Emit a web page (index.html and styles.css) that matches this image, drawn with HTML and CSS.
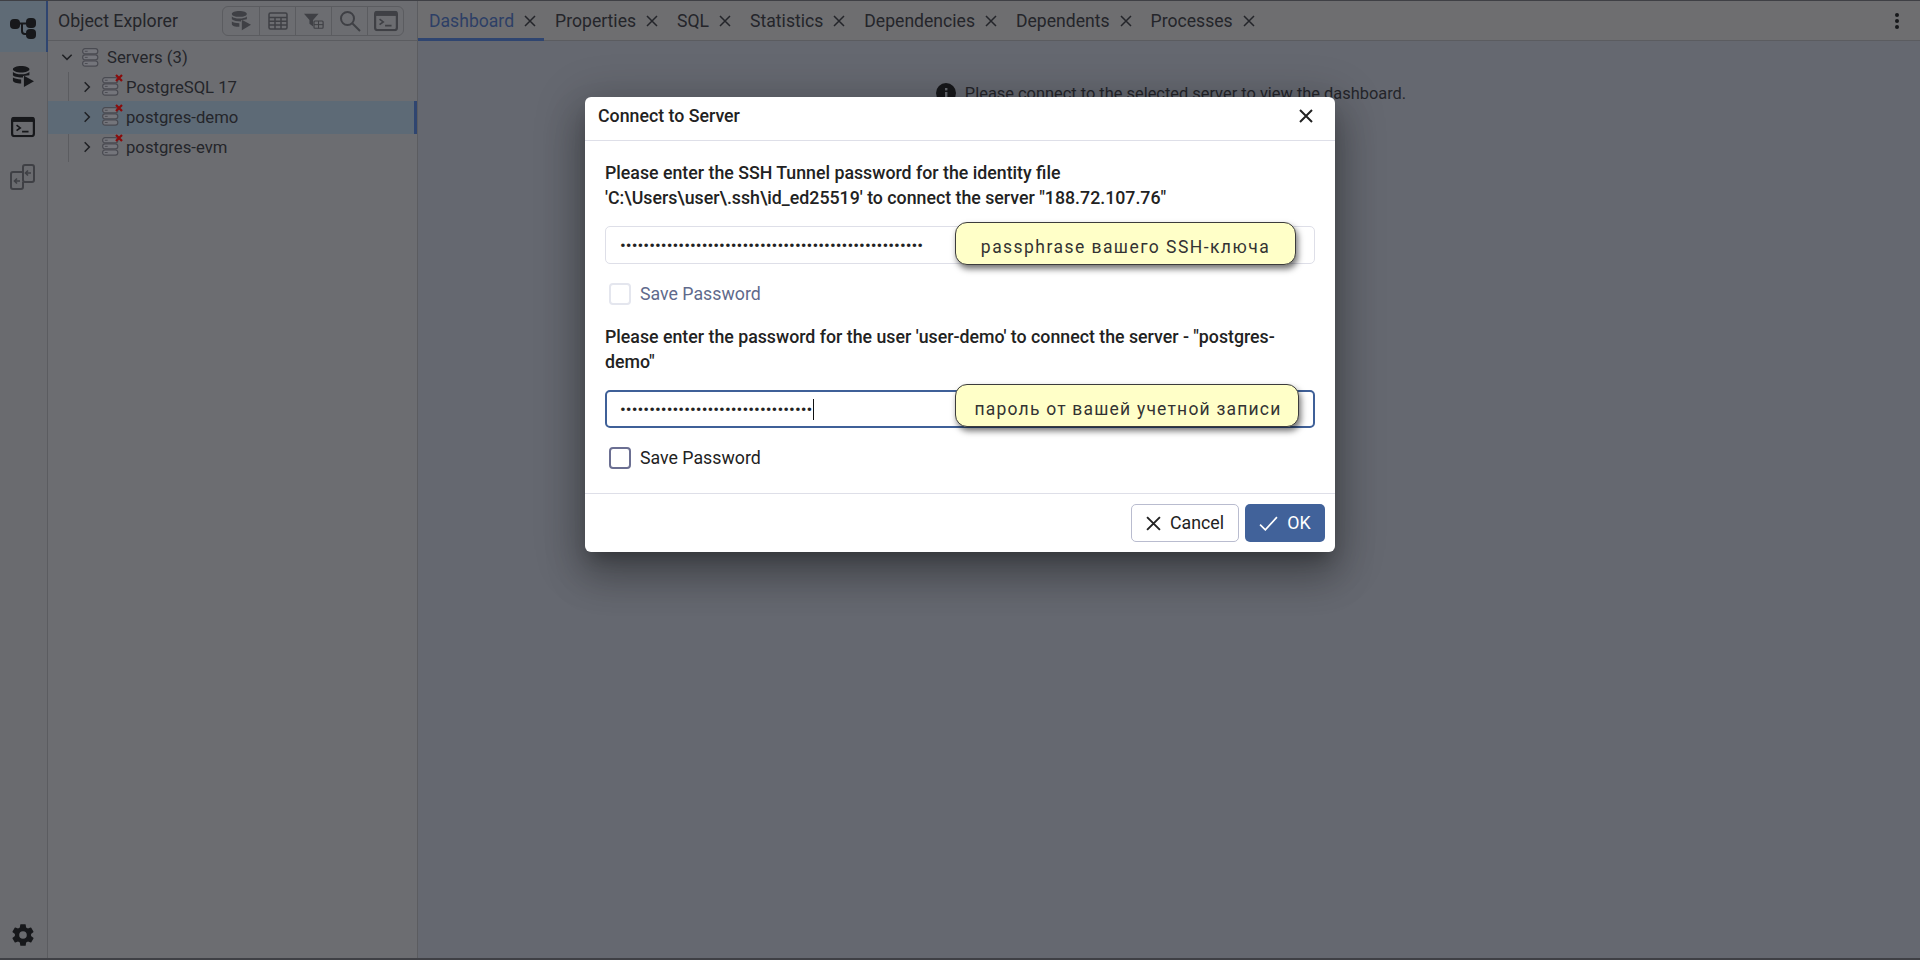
FILE: index.html
```html
<!DOCTYPE html>
<html lang="en">
<head>
<meta charset="utf-8">
<title>pgAdmin - Connect to Server</title>
<link rel="stylesheet" href="styles.css">
</head>
<body>
<div class="app">
  <nav class="rail">
    <div class="rail-item active">
      <svg class="ico26" viewBox="0 0 26 26"><g fill="#17181b"><rect x="0" y="5" width="10" height="10" rx="4"/><rect x="16" y="4" width="10" height="10" rx="4"/><rect x="16" y="15" width="10" height="10" rx="4"/></g><path d="M9 9.500H16M12 10V17Q12 20 15 20H17" fill="none" stroke="#17181b" stroke-width="2"/></svg>
    </div>
    <div class="rail-item">
      <svg class="ico22" viewBox="0 0 24 24"><use href="#dbplay"/></svg>
    </div>
    <div class="rail-item">
      <svg class="ico24" viewBox="0 0 26 22"><use href="#term"/></svg>
    </div>
    <div class="rail-item">
      <svg class="ico26" viewBox="0 0 26 26" fill="none" stroke="#3f4045" stroke-width="2"><path d="M12 8H3Q1 8 1 10V23Q1 25 3 25H11Q13 25 13 23V18"/><rect x="13" y="1" width="11" height="17" rx="2"/><path d="M10 17H5M7 14.500L4.500 17L7 19.500M21 9H16M18 6.500L15.500 9L18 11.500" stroke-width="1.600"/></svg>
    </div>
    <div class="rail-spacer"></div>
    <div class="rail-gear">
      <svg class="ico26" viewBox="0 0 24 24"><path fill="#17181b" d="M19.400 13c.04-.33.06-.66.06-1s-.02-.67-.06-1l2.100-1.640a.5.5 0 0 0 .12-.64l-2-3.460a.5.5 0 0 0-.6-.22l-2.480 1a7.300 7.300 0 0 0-1.700-1l-.38-2.640A.5.500 0 0 0 14 2h-4a.5.500 0 0 0-.5.420l-.38 2.640c-.6.250-1.180.600-1.700 1l-2.480-1a.5.500 0 0 0-.6.220l-2 3.460a.5.500 0 0 0 .12.640L4.560 11c-.04.330-.06.660-.06 1s.02.670.06 1l-2.100 1.640a.5.500 0 0 0-.12.640l2 3.460c.12.220.38.300.6.220l2.480-1c.52.400 1.100.750 1.700 1l.38 2.640c.04.240.25.420.5.420h4c.25 0 .46-.18.5-.42l.38-2.640c.6-.25 1.180-.6 1.700-1l2.480 1c.22.080.48 0 .6-.22l2-3.460a.5.500 0 0 0-.12-.64zM12 15.500a3.500 3.500 0 1 1 0-7 3.500 3.500 0 0 1 0 7z"/></svg>
    </div>
  </nav>

  <aside class="explorer">
    <header class="explorer-head">
      <span class="explorer-title">Object Explorer</span>
      <div class="tools">
        <span class="tool"><svg class="ico20" viewBox="0 0 24 24"><use href="#dbplay"/></svg></span>
        <span class="tool"><svg class="ico20" viewBox="0 0 20 18" fill="none" stroke="#3f4045" stroke-width="1.500"><rect x="1" y="1" width="18" height="16" rx="1.500"/><path d="M1 5.500H19M1 9.300H19M1 13.100H19M7 5.500V17M13 5.500V17"/></svg></span>
        <span class="tool"><svg class="ico20" viewBox="0 0 22 18"><path fill="#3f4045" d="M0 1H16L10 8V15L6 12V8z"/><rect x="11" y="9" width="10" height="8" rx="1" fill="none" stroke="#3f4045" stroke-width="1.300"/><path d="M11 13H21M16 9V17" stroke="#3f4045" stroke-width="1.100"/></svg></span>
        <span class="tool"><svg class="ico22" viewBox="0 0 22 22" fill="none" stroke="#3f4045" stroke-width="2"><circle cx="8.500" cy="8.500" r="6.500"/><path d="M13.500 13.500L21 21"/></svg></span>
        <span class="tool"><svg class="ico24" viewBox="0 0 26 22"><use href="#term"/></svg></span>
      </div>
    </header>
    <ul class="tree">
      <li class="tree-row root">
        <svg class="chev" viewBox="0 0 12 12"><path d="M2 4L6 8L10 4"/></svg>
        <svg class="srv" viewBox="0 0 18 20"><use href="#stack"/></svg>
        <span>Servers (3)</span>
      </li>
      <li class="tree-row child">
        <svg class="chev" viewBox="0 0 12 12"><path d="M4 2L8 6L4 10"/></svg>
        <span class="srv-wrap"><svg class="srv" viewBox="0 0 18 20"><use href="#stack"/></svg><svg class="srv-x" viewBox="0 0 8 8"><path d="M1 1L7 7M7 1L1 7"/></svg></span>
        <span>PostgreSQL 17</span>
      </li>
      <li class="tree-row child selected">
        <svg class="chev" viewBox="0 0 12 12"><path d="M4 2L8 6L4 10"/></svg>
        <span class="srv-wrap"><svg class="srv" viewBox="0 0 18 20"><use href="#stack"/></svg><svg class="srv-x" viewBox="0 0 8 8"><path d="M1 1L7 7M7 1L1 7"/></svg></span>
        <span>postgres-demo</span>
      </li>
      <li class="tree-row child">
        <svg class="chev" viewBox="0 0 12 12"><path d="M4 2L8 6L4 10"/></svg>
        <span class="srv-wrap"><svg class="srv" viewBox="0 0 18 20"><use href="#stack"/></svg><svg class="srv-x" viewBox="0 0 8 8"><path d="M1 1L7 7M7 1L1 7"/></svg></span>
        <span>postgres-evm</span>
      </li>
    </ul>
  </aside>

  <main class="main">
    <div class="tabbar">
      <div class="tab current"><span>Dashboard</span><svg class="x" viewBox="0 0 12 12"><path d="M1 1L11 11M11 1L1 11"/></svg></div>
      <div class="tab"><span>Properties</span><svg class="x" viewBox="0 0 12 12"><path d="M1 1L11 11M11 1L1 11"/></svg></div>
      <div class="tab"><span>SQL</span><svg class="x" viewBox="0 0 12 12"><path d="M1 1L11 11M11 1L1 11"/></svg></div>
      <div class="tab"><span>Statistics</span><svg class="x" viewBox="0 0 12 12"><path d="M1 1L11 11M11 1L1 11"/></svg></div>
      <div class="tab"><span>Dependencies</span><svg class="x" viewBox="0 0 12 12"><path d="M1 1L11 11M11 1L1 11"/></svg></div>
      <div class="tab"><span>Dependents</span><svg class="x" viewBox="0 0 12 12"><path d="M1 1L11 11M11 1L1 11"/></svg></div>
      <div class="tab"><span>Processes</span><svg class="x" viewBox="0 0 12 12"><path d="M1 1L11 11M11 1L1 11"/></svg></div>
      <div class="kebab"><i></i><i></i><i></i></div>
    </div>
    <div class="notice">
      <svg class="ico20" viewBox="0 0 20 20"><circle cx="10" cy="10" r="10" fill="#17181b"/><rect x="9" y="9" width="2.400" height="6" fill="#66696f"/><rect x="9" y="5" width="2.400" height="2.400" fill="#66696f"/></svg>
      <span>Please connect to the selected server to view the dashboard.</span>
    </div>
  </main>
</div>

<section class="dialog">
  <header class="dialog-head">
    <span>Connect to Server</span>
    <svg class="dialog-x" viewBox="0 0 14 14"><path d="M1 1L13 13M13 1L1 13"/></svg>
  </header>
  <div class="dialog-body">
    <p class="prompt">Please enter the SSH Tunnel password for the identity file<br>'C:\Users\user\.ssh\id_ed25519' to connect the server "188.72.107.76"</p>
    <div class="field">••••••••••••••••••••••••••••••••••••••••••••••••••••</div>
    <label class="check off"><span class="box"></span><span>Save Password</span></label>
    <p class="prompt second">Please enter the password for the user 'user-demo' to connect the server - "postgres-demo"</p>
    <div class="field focus">•••••••••••••••••••••••••••••••••<span class="caret"></span></div>
    <label class="check"><span class="box"></span><span>Save Password</span></label>
  </div>
  <footer class="dialog-foot">
    <button class="btn ghost"><svg class="btn-x" viewBox="0 0 14 14"><path d="M1 1L13 13M13 1L1 13"/></svg>Cancel</button>
    <button class="btn primary"><svg class="btn-ok" viewBox="0 0 18 14"><path d="M1 8L6 13L17 1"/></svg>OK</button>
  </footer>
  <div class="note note-a">passphrase вашего SSH-ключа</div>
  <div class="note note-b">пароль от вашей учетной записи</div>
</section>

<svg class="defs" aria-hidden="true">
  <symbol id="dbplay" viewBox="0 0 24 24">
    <path fill="currentColor" d="M1 3.500C1 1.500 5 0 10 0s9 1.500 9 3.500S15 7 10 7 1 5.500 1 3.500zM1 6.500C3 8.300 6 9 10 9s7-.7 9-2.500V10l-7 1v1.500C8 12.500 3 12 1 10zM1 12.500c2 1.300 5 2 9 2.100V19C5 19 1 18 1 15.500zM13 10.500L24 16.500L13 23z"/>
  </symbol>
  <symbol id="term" viewBox="0 0 26 22">
    <rect x="1.200" y="1.200" width="23.600" height="19.600" rx="2.500" fill="none" stroke="currentColor" stroke-width="2.400"/>
    <rect x="1" y="1" width="24" height="4.500" fill="currentColor"/>
    <path d="M6 9L10 12L6 15" fill="none" stroke="currentColor" stroke-width="1.800"/>
    <path d="M12 16H19" stroke="currentColor" stroke-width="1.800"/>
  </symbol>
  <symbol id="stack" viewBox="0 0 18 20">
    <g fill="#74757b" stroke="#4a4b52" stroke-width="1.300"><rect x=".7" y=".7" width="16" height="5.400" rx="2.500"/><rect x=".7" y="7.200" width="16" height="5.400" rx="2.500"/><rect x=".7" y="13.700" width="16" height="5.400" rx="2.500"/></g>
    <path d="M3 3.400H6M3 9.900H6M3 16.400H6" stroke="#4a4b52" stroke-width="1"/>
  </symbol>
</svg>
</body>
</html>
```

FILE: styles.css
```css
* { box-sizing: border-box; }
html, body { margin: 0; height: 100%; overflow: hidden; }
body {
  font-family: Roboto, "Liberation Sans", sans-serif;
  font-size: 17.750px;
  color: #1f2024;
  background: #656870;
}
ul { list-style: none; margin: 0; padding: 0; }
p { margin: 0; }
.defs { width: 0; height: 0; position: absolute; }
.ico20 { width: 20px; height: 20px; }
.ico22 { width: 22px; height: 22px; }
.ico24 { width: 24px; height: 24px; }
.ico26 { width: 26px; height: 26px; }

.app {
  display: flex;
  height: 960px;
  border-top: 1px solid #3f4045;
  border-bottom: 2px solid #3f4045;
}

/* left rail */
.rail {
  width: 48px;
  flex: none;
  display: flex;
  flex-direction: column;
  background: #6a6b6f;
  border-right: 1px solid #5b5c60;
  color: #17181b;
}
.rail-item { height: 50px; display: flex; align-items: center; justify-content: center; padding-right: 2px; }
.rail-item.active { background: #5f6b76; border-right: 2px solid #2f4570; padding-right: 0; height: 51px; margin-right: -1px; }
.rail-spacer { flex: 1; }
.rail-gear { height: 46px; display: flex; align-items: center; justify-content: center; padding-right: 2px; }

/* explorer */
.explorer {
  width: 370px;
  flex: none;
  background: #6c6d71;
  border-right: 1px solid #5b5c60;
}
.explorer-head {
  height: 40px;
  display: flex;
  align-items: center;
  justify-content: space-between;
  padding: 0 13px 0 10px;
  border-bottom: 1px solid #5b5c60;
}
.explorer-title { color: #24252a; }
.tools {
  display: flex;
  height: 30px;
  border: 1px solid #5b5c60;
  border-radius: 6px;
  color: #3f4045;
}
.tool {
  width: 36px;
  display: flex;
  align-items: center;
  justify-content: center;
  border-left: 1px solid #5b5c60;
}
.tool:first-child { border-left: 0; }
.tree { padding-top: 1px; }
.tree-row {
  height: 30px;
  display: flex;
  align-items: center;
  color: #24252a;
  font-size: 16.700px;
}
.tree-row.root { padding-left: 12px; }
.tree-row.child { margin-left: 20px; padding-left: 11px; border-left: 1px solid #5b5c60; }
.tree-row.selected {
  margin: -1.500px 0;
  padding-left: 32px;
  height: 33px;
  position: relative;
  background: #5d6a76;
  border-left: 0;
  border-right: 3px solid #2f4570;
}
.chev { width: 14px; height: 14px; flex: none; fill: none; stroke: #1f2024; stroke-width: 1.300; }
.srv { width: 17px; height: 19px; flex: none; }
.root .srv { margin: 0 8px; }
.srv-wrap { position: relative; width: 20px; height: 20px; margin: 0 4px 0 8px; display: flex; flex: none; }
.srv-x {
  position: absolute;
  top: -3px;
  right: -1px;
  width: 8px;
  height: 8px;
  fill: none;
  stroke: #8a0c0c;
  stroke-width: 2.200;
}

/* main */
.main { flex: 1; min-width: 0; background: #656870; }
.tabbar {
  height: 40px;
  display: flex;
  align-items: stretch;
  background: #6e6e70;
  border-bottom: 1px solid #5b5c60;
}
.tab {
  display: flex;
  align-items: center;
  gap: 10px;
  padding: 3px 8px 0 11px;
  color: #24252a;
  font-size: 17.600px;
  border-bottom: 3px solid transparent;
  margin-bottom: -1px;
}
.tab.current { color: #2d3f66; border-bottom-color: #2f4570; }
.x { width: 12px; height: 12px; fill: none; stroke: #24252a; stroke-width: 1.500; }
.kebab {
  margin-left: auto;
  width: 46px;
  display: flex;
  flex-direction: column;
  gap: 2px;
  align-items: center;
  justify-content: center;
}
.kebab i { width: 4px; height: 4px; border-radius: 50%; background: #17181b; }
.notice {
  display: flex;
  align-items: center;
  justify-content: center;
  gap: 9px;
  margin-top: 42px;
  padding-left: 4px;
  color: #24252a;
  font-size: 16.400px;
}

/* dialog */
.dialog {
  position: absolute;
  left: 585px;
  top: 97px;
  width: 750px;
  height: 455px;
  display: flex;
  flex-direction: column;
  background: #fff;
  border-radius: 6px;
  box-shadow: 0 11px 15px -7px rgba(0,0,0,.25), 0 24px 38px 3px rgba(0,0,0,.2), 0 9px 46px 8px rgba(0,0,0,.2);
  color: #222;
}
.dialog-head {
  height: 44px;
  flex: none;
  display: flex;
  align-items: center;
  justify-content: space-between;
  padding: 0 22px 5px 13px;
  border-bottom: 1px solid #dedfe8;
  font-weight: 500;
}
.dialog-x { width: 14px; height: 14px; fill: none; stroke: #222; stroke-width: 2; }
.dialog-body { flex: 1; padding: 20px 20px 0; }
.prompt { font-weight: 500; line-height: 25px; }
.prompt.second { margin-top: 19px; }
.field {
  height: 38px;
  margin-top: 15px;
  padding: 0 14px;
  display: flex;
  align-items: center;
  border: 1px solid #dedfe8;
  border-radius: 5px;
  font-size: 17.300px;
  overflow: hidden;
}
.field.focus { border: 2px solid #3f6098; padding: 0 13px; }
.caret { width: 1px; height: 21px; background: #111; margin-left: 1px; flex: none; }
.check {
  display: flex;
  align-items: center;
  gap: 9px;
  margin: 18px 0 0 4px;
  height: 24px;
}
.box { width: 22px; height: 22px; border: 2px solid #6b6f92; border-radius: 4px; }
.check.off { color: #5f6a8c; }
.check.off .box { border-color: #e4e6ee; }
.dialog-foot {
  height: 59px;
  flex: none;
  display: flex;
  justify-content: flex-end;
  align-items: center;
  gap: 6px;
  padding: 0 10px;
  border-top: 1px solid #dedfe8;
}
.btn {
  height: 38px;
  display: flex;
  align-items: center;
  font: inherit;
  border-radius: 5px;
  padding: 0;
  justify-content: center;
  gap: 9px;
}
.btn.ghost { width: 108px; background: #fff; color: #222; border: 1px solid #b9bccf; }
.btn.primary { width: 80px; background: #41629a; color: #fff; border: 0; }
.btn-x { width: 15px; height: 15px; fill: none; stroke: #222; stroke-width: 1.800; }
.btn-ok { width: 19px; height: 15px; fill: none; stroke: #fff; stroke-width: 1.600; }

/* callouts */
.note {
  position: absolute;
  left: 370px;
  display: flex;
  align-items: center;
  justify-content: center;
  padding-top: 6px;
  background: #ffffc8;
  border: 1px solid #3c3c3c;
  border-radius: 12px;
  box-shadow: 2px 4px 6px rgba(0,0,0,.55);
  font-family: Roboto, sans-serif;
  font-size: 17.500px;
  color: #333;
}
.note-a { top: 125px; width: 341px; height: 43px; letter-spacing: 1.450px; }
.note-b { top: 287px; width: 344px; height: 43px; letter-spacing: 1.200px; padding-left: 2px; }
```
